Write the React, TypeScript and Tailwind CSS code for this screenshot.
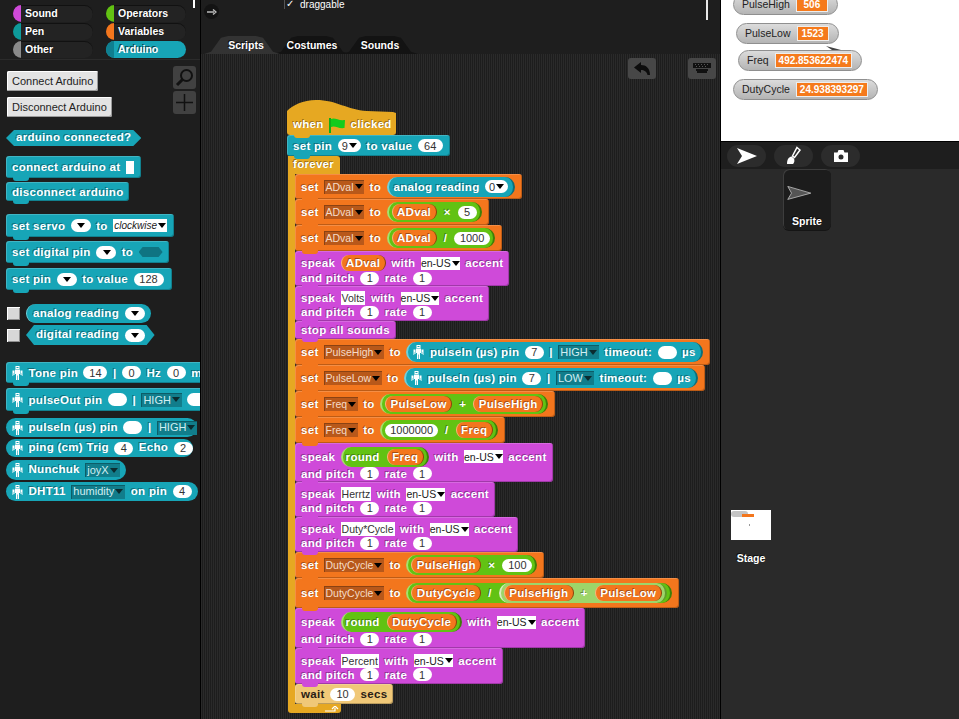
import type { ReactNode } from "react";

const TEAL = "bg-[#17a5b7]";
const ORANGE = "bg-[#f3761d]";
const PURPLE = "bg-[#cf4ad9]";
const BEVEL = "shadow-[inset_1px_1px_0_rgba(255,255,255,0.18),inset_-1px_-1px_0_rgba(0,0,0,0.22)]";

interface BlockProps {
  bg: string;
  className?: string;
  children: ReactNode;
}

function Block({ bg, className = "", children }: BlockProps) {
  return (
    <div className={`relative flex w-fit flex-col justify-center rounded-[3px] pl-[6px] pr-[6px] ${BEVEL} ${bg} ${className}`}>
      {children}
      <span className="absolute -bottom-[3px] left-[7px] z-10 h-[5px] w-[16px] rounded-b-[3px] bg-inherit" />
    </div>
  );
}

function Row({ children }: { children: ReactNode }) {
  return <div className="flex min-h-[14px] items-center gap-[5.500px] whitespace-nowrap leading-[14px]">{children}</div>;
}

function Arrow({ className = "border-t-black" }: { className?: string }) {
  return <span className={`ml-[1px] inline-block h-0 w-0 border-x-[4px] border-t-[5px] border-x-transparent ${className}`} />;
}

function Num({ children, wide = "" }: { children?: ReactNode; wide?: string }) {
  return (
    <span className={`inline-flex h-[13px] min-w-[19px] items-center justify-center rounded-full bg-white px-[5px] text-[11px] font-normal tracking-normal text-[#333] [text-shadow:none] ${wide}`}>
      {children}
    </span>
  );
}

function NumDrop({ children }: { children?: ReactNode }) {
  return (
    <span className="inline-flex h-[13px] min-w-[20px] items-center justify-center rounded-full bg-white px-[4px] text-[11px] font-normal tracking-normal text-[#333] [text-shadow:none]">
      {children}
      <Arrow />
    </span>
  );
}

function WhiteDrop({ children }: { children: ReactNode }) {
  return (
    <span className="inline-flex h-[13px] items-center bg-white px-0 text-[10.500px] font-normal tracking-normal text-[#222] [text-shadow:none]">
      {children}
      <Arrow />
    </span>
  );
}

function TextSlot({ children }: { children: ReactNode }) {
  return <span className="inline-flex h-[14px] items-center bg-white px-[1px] text-[10.500px] font-normal tracking-normal text-[#333] [text-shadow:none]">{children}</span>;
}

function VarDrop({ children }: { children: ReactNode }) {
  return (
    <span className="inline-flex h-[14px] items-center bg-[#b8581a] px-[1.500px] text-[10.500px] font-normal tracking-normal text-[#f5dcc8] shadow-[inset_1px_1px_0_rgba(0,0,0,0.25)] [text-shadow:none]">
      {children}
      <Arrow />
    </span>
  );
}

function TealDrop({ children }: { children: ReactNode }) {
  return (
    <span className="inline-flex h-[14px] items-center bg-[#117d8b] px-[2px] text-[11px] font-normal tracking-normal text-[#d2eef2] shadow-[inset_1px_1px_0_rgba(0,0,0,0.25)] [text-shadow:none]">
      {children}
      <Arrow className="border-t-[#0b2c30]" />
    </span>
  );
}

function Var({ children }: { children: ReactNode }) {
  return (
    <span className="inline-flex h-[16px] items-center rounded-full border-l border-r border-l-[#ffb27a] border-r-[#8a3f08] bg-[#f3761d] px-[4.500px]">
      {children}
    </span>
  );
}

function Op({ children, light = false }: { children: ReactNode; light?: boolean }) {
  return (
    <span
      className={`inline-flex h-[20px] items-center gap-[7px] rounded-full border-l-2 border-r-2 px-[3px] ${
        light ? "border-l-[#d9efc2] border-r-[#5f9c2a] bg-[#9dd56a]" : "border-l-[#a5e06f] border-r-[#3d7f08] bg-[#62c213]"
      }`}
    >
      {children}
    </span>
  );
}

function Robot() {
  return (
    <svg width="11" height="14" viewBox="0 0 11 14" className="shrink-0">
      <path
        d="M3.500 0h4v3h-4zM3 3.500h5V8H7V14H5.800V9.500H5.200V14H4V8H3zM0.500 4.500h2V9H1.500V7H1.200V10H0.500zM8.500 4.500h2V10H9.800V7H9.500V9H8.500z"
        fill="#fff"
      />
      <rect x="4.500" y="1" width="2" height="1" fill="#17a5b7" />
    </svg>
  );
}

function Speak({ first, className = "h-[35px] pt-[3px]" }: { first: ReactNode; className?: string }) {
  return (
    <Block bg={PURPLE} className={className}>
      <Row>
        speak
        {first}
        with
        <WhiteDrop>en-US</WhiteDrop>
        accent
      </Row>
      <Row>
        and pitch <Num>1</Num> rate <Num>1</Num>
      </Row>
    </Block>
  );
}

function SetVar({ name, className = "h-[26px]", children }: { name: string; className?: string; children: ReactNode }) {
  return (
    <Block bg={ORANGE} className={`!pr-[7px] ${className}`}>
      <Row>
        set <VarDrop>{name}</VarDrop> to {children}
      </Row>
    </Block>
  );
}

function PulseIn({ level }: { level: string }) {
  return (
    <span className="inline-flex h-[20px] items-center gap-[5.500px] rounded-full border-l-2 border-r-2 border-l-[#6fd0dc] border-r-[#0c6e7b] bg-[#17a5b7] px-[5px]">
      <Robot />
      pulseIn (µs) pin <Num>7</Num> | <TealDrop>{level}</TealDrop> timeout: <Num /> µs
    </span>
  );
}

function Category({ name, tab, active = false }: { name: string; tab: string; active?: boolean }) {
  return (
    <div className={`flex h-[17px] items-center gap-[4px] overflow-hidden rounded-full ${active ? "bg-[#17a5b7]" : "bg-[#232323] shadow-[inset_0_1px_0_#111]"}`}>
      <span className={`h-full w-[8px] ${tab}`} />
      <span className="text-[10.500px] font-bold text-white [text-shadow:-1px_-1px_0_rgba(0,0,0,0.6)]">{name}</span>
    </div>
  );
}

function PaletteButton({ children, className = "" }: { children: ReactNode; className?: string }) {
  return (
    <div className={`flex h-[20px] w-fit items-center rounded-[2px] bg-[#e3e3e3] px-[5px] text-[11px] text-[#222] shadow-[inset_1px_1px_0_#fff,inset_-1px_-1px_0_#9a9a9a] ${className}`}>
      {children}
    </div>
  );
}

function IconButton({ children, className = "" }: { children: ReactNode; className?: string }) {
  return <div className={`flex h-[23px] w-[23px] items-center justify-center rounded-[3px] bg-[#414141] ${className}`}>{children}</div>;
}

function Check({ className = "" }: { className?: string }) {
  return <span className={`block h-[13px] w-[13px] bg-[#d8d8d8] shadow-[inset_1px_1px_0_#fff,inset_-1px_-1px_0_#8f8f8f] ${className}`} />;
}

function Palette() {
  return (
    <aside className="relative h-full w-[201px] shrink-0 overflow-hidden border-r border-black bg-[#1e1e1e]">
      <span className="absolute left-[193px] top-0 h-[8px] w-[2px] bg-white" />
      <div className="grid grid-cols-[80px_80px] gap-x-[13px] gap-y-[1px] pl-[13px] pt-[5px]">
        <Category name="Sound" tab="bg-[#cf4ad9]" />
        <Category name="Operators" tab="bg-[#62c213]" />
        <Category name="Pen" tab="bg-[#0e9a9a]" />
        <Category name="Variables" tab="bg-[#f3761d]" />
        <Category name="Other" tab="bg-[#8a8a8a]" />
        <Category name="Arduino" tab="bg-[#0f7f90]" active />
      </div>
      <div className="mt-[1px] h-px bg-[#2b2b2b]" />

      <div className="flex justify-between pl-[7px] pr-[4px] pt-[6px]">
        <div className="flex flex-col gap-[6px] pt-[5px]">
          <PaletteButton>Connect Arduino</PaletteButton>
          <PaletteButton>Disconnect Arduino</PaletteButton>
        </div>
        <div className="flex flex-col gap-[2px]">
          <IconButton>
            <svg width="19" height="19" viewBox="0 0 19 19" fill="none" stroke="#111" strokeWidth="2">
              <circle cx="11.500" cy="7.500" r="5.500" />
              <path d="M7.500 11.500L2 17" strokeWidth="3" />
            </svg>
          </IconButton>
          <IconButton>
            <svg width="17" height="17" viewBox="0 0 17 17" stroke="#111" strokeWidth="1.500">
              <path d="M8.500 0v17M0 8.500h17" />
            </svg>
          </IconButton>
        </div>
      </div>

      <div className="mt-[13px] flex flex-col pl-[6px] text-[11.500px] font-bold tracking-[0.3px] text-white [text-shadow:-1px_-1px_0_rgba(0,0,0,0.35)]">
        <div className="flex h-[16px] w-fit items-center bg-[#17a5b7] px-[10px] [clip-path:polygon(0_50%,8px_0,calc(100%-8px)_0,100%_50%,calc(100%-8px)_100%,8px_100%)]">
          arduino connected?
        </div>
        <Block bg={TEAL} className="mt-[10px] h-[22px] !pr-[7px]">
          <Row>
            connect arduino at <span className="h-[13px] w-[8px] bg-white" />
          </Row>
        </Block>
        <Block bg={TEAL} className="mt-[4px] h-[19px]">
          <Row>disconnect arduino</Row>
        </Block>
        <Block bg={TEAL} className="mt-[13px] h-[23px] !pr-[7px]">
          <Row>
            set servo <NumDrop /> to
            <span className="inline-flex h-[13px] items-center bg-white px-[1px] text-[10px] font-normal italic tracking-normal text-[#222] [text-shadow:none]">
              clockwise
              <Arrow />
            </span>
          </Row>
        </Block>
        <Block bg={TEAL} className="mt-[4px] h-[22px]">
          <Row>
            set digital pin <NumDrop /> to
            <span className="h-[10px] w-[24px] bg-[#0f7482] [clip-path:polygon(0_50%,4px_0,calc(100%-4px)_0,100%_50%,calc(100%-4px)_100%,4px_100%)]" />
          </Row>
        </Block>
        <Block bg={TEAL} className="mt-[5px] h-[22px] !pr-[8px]">
          <Row>
            set pin <NumDrop /> to value <Num wide="w-[30px]">128</Num>
          </Row>
        </Block>

        <div className="mt-[14px] flex items-center gap-[6px] pl-[1px]">
          <Check />
          <span className="inline-flex h-[19px] items-center gap-[5.500px] rounded-full border-l border-[#6fd0dc] bg-[#17a5b7] px-[6px]">
            analog reading <NumDrop />
          </span>
        </div>
        <div className="mt-[2px] flex items-center gap-[6px] pl-[1px]">
          <Check />
          <span className="inline-flex h-[20px] items-center gap-[5.500px] bg-[#17a5b7] px-[10px] [clip-path:polygon(0_50%,8px_0,calc(100%-8px)_0,100%_50%,calc(100%-8px)_100%,8px_100%)]">
            digital reading <NumDrop />
          </span>
        </div>

        <Block bg={TEAL} className="mt-[17px] h-[21px]">
          <Row>
            <Robot /> Tone pin <Num wide="w-[24px]">14</Num> | <Num>0</Num> Hz <Num>0</Num> ms
          </Row>
        </Block>
        <Block bg={TEAL} className="mt-[5px] h-[23px]">
          <Row>
            <Robot /> pulseOut pin <Num /> | <TealDrop>HIGH</TealDrop> <Num />
          </Row>
        </Block>
        <div className="mt-[7px] flex h-[19px] w-fit items-center gap-[5.500px] whitespace-nowrap rounded-full bg-[#17a5b7] pl-[6px]">
          <Robot /> pulseIn (µs) pin <Num /> | <TealDrop>HIGH</TealDrop>
        </div>
        <div className="mt-[2px] flex h-[18px] w-fit items-center gap-[5.500px] whitespace-nowrap rounded-full bg-[#17a5b7] pl-[6px]">
          <Robot /> ping (cm) Trig <Num>4</Num> Echo <Num>2</Num>
        </div>
        <div className="mt-[3px] flex h-[20px] w-fit items-center gap-[5.500px] whitespace-nowrap rounded-full bg-[#17a5b7] px-[6px]">
          <Robot /> Nunchuk <TealDrop>joyX</TealDrop>
        </div>
        <div className="mt-[2px] flex h-[19px] w-fit items-center gap-[5.500px] whitespace-nowrap rounded-full bg-[#17a5b7] px-[6px]">
          <Robot /> DHT11 <TealDrop>humidity</TealDrop> on pin <Num>4</Num>
        </div>
      </div>
    </aside>
  );
}

function Tab({ children, active = false, className = "" }: { children: ReactNode; active?: boolean; className?: string }) {
  return (
    <div
      className={`flex h-[18px] w-[76px] items-center justify-center pt-[1px] text-[10.500px] font-bold text-white [clip-path:polygon(0_100%,7px_88%,17px_10%,24px_0,calc(100%-24px)_0,calc(100%-17px)_10%,calc(100%-7px)_88%,100%_100%)] [text-shadow:-1px_-1px_0_rgba(0,0,0,0.7)] ${
        active ? "z-10 bg-[#333333]" : "bg-[#131313]"
      } ${className}`}
    >
      {children}
    </div>
  );
}

function Script() {
  return (
    <div className="flex flex-col pl-[86px] pt-[46px] text-[11.500px] font-bold tracking-[0.3px] text-white [text-shadow:-1px_-1px_0_rgba(0,0,0,0.35)]">
      {/* hat */}
      <div className="flex w-fit flex-col">
        <svg width="109" height="13" viewBox="0 0 109 13" className="block">
          <path d="M0 13V11C6 5 16 0 29 0C50 0 60 10 80 11L106 12L109 13z" fill="#e6a822" />
        </svg>
        <div className="relative flex h-[22px] w-[109px] items-center gap-[5px] rounded-b-[3px] bg-[#e6a822] pl-[6px] pt-[2px]">
          when
          <svg width="17" height="17" viewBox="0 0 17 17" className="shrink-0">
            <path d="M1 1V16" stroke="#0fae17" strokeWidth="2" />
            <path d="M2 2C6 0 9 4 16 3L15.500 11C9 12 6 8 2 10z" fill="#12cc1c" />
          </svg>
          clicked
          <span className="absolute -bottom-[3px] left-[7px] z-10 h-[5px] w-[16px] rounded-b-[3px] bg-inherit" />
        </div>
      </div>
      <Block bg={TEAL} className="h-[21px] !pr-[7px]">
        <Row>
          set pin <NumDrop>9</NumDrop> to value <Num wide="w-[25px]">64</Num>
        </Row>
      </Block>

      {/* forever */}
      <div className="relative ml-[1px] flex h-[18px] w-[52px] items-center rounded-tr-[3px] bg-[#e6a822] pl-[5px]">forever</div>
      <div className="ml-[1px] flex flex-col border-l-[7px] border-[#e6a822]">
        <SetVar name="ADval" className="h-[25px]">
          <span className="inline-flex h-[20px] items-center gap-[5.500px] rounded-full border-l-2 border-r-2 border-l-[#6fd0dc] border-r-[#0c6e7b] bg-[#17a5b7] px-[5px]">
            analog reading <NumDrop>0</NumDrop>
          </span>
        </SetVar>
        <SetVar name="ADval">
          <Op>
            <Var>ADval</Var> × <Num>5</Num>
          </Op>
        </SetVar>
        <SetVar name="ADval">
          <Op>
            <Var>ADval</Var> / <Num wide="w-[36px]">1000</Num>
          </Op>
        </SetVar>
        <Speak first={<Var>ADval</Var>} />
        <Speak first={<TextSlot>Volts</TextSlot>} />
        <Block bg={PURPLE} className="h-[18px]">
          <Row>stop all sounds</Row>
        </Block>
        <SetVar name="PulseHigh">
          <PulseIn level="HIGH" />
        </SetVar>
        <SetVar name="PulseLow">
          <PulseIn level="LOW" />
        </SetVar>
        <SetVar name="Freq">
          <Op>
            <Var>PulseLow</Var> + <Var>PulseHigh</Var>
          </Op>
        </SetVar>
        <SetVar name="Freq">
          <Op>
            <Num wide="w-[53px]">1000000</Num> / <Var>Freq</Var>
          </Op>
        </SetVar>
        <Speak
          first={
            <Op>
              round <Var>Freq</Var>
            </Op>
          }
          className="h-[39px] pt-[2px]"
        />
        <Speak first={<TextSlot>Herrtz</TextSlot>} />
        <Speak first={<TextSlot>Duty*Cycle</TextSlot>} />
        <SetVar name="DutyCycle">
          <Op>
            <Var>PulseHigh</Var> × <Num wide="w-[30px]">100</Num>
          </Op>
        </SetVar>
        <SetVar name="DutyCycle" className="h-[30px]">
          <Op>
            <Var>DutyCycle</Var> /
            <Op light>
              <Var>PulseHigh</Var> + <Var>PulseLow</Var>
            </Op>
          </Op>
        </SetVar>
        <Speak
          first={
            <Op>
              round <Var>DutyCycle</Var>
            </Op>
          }
          className="h-[40px] pt-[2px]"
        />
        <Speak first={<TextSlot>Percent</TextSlot>} className="h-[36px] pt-[3px]" />
        <Block bg="bg-[#f0c878]" className="h-[20px]">
          <Row>
            <span className="text-[#2a2015] [text-shadow:none]">wait</span> <Num wide="w-[25px]">10</Num>{" "}
            <span className="text-[#2a2015] [text-shadow:none]">secs</span>
          </Row>
        </Block>
      </div>
      <div className="relative ml-[1px] flex h-[9px] w-[53px] items-center justify-end rounded-b-[3px] bg-[#e6a822] pr-[2px]">
        <svg width="14" height="6" viewBox="0 0 14 6" className="block">
          <path d="M0 5H10V2M7 3L10 0L13 3" fill="none" stroke="#fff" strokeWidth="1.200" />
        </svg>
      </div>
    </div>
  );
}

function Editor() {
  return (
    <main className="flex h-full w-[519px] shrink-0 flex-col bg-[#1e1e1e]">
      <div className="relative h-[36px] shrink-0">
        <span className="absolute left-[505px] top-0 h-[20px] w-[2px] bg-[#e8e8e8]" />
        <div className="flex pl-[3px] pt-[4px]">
          <span className="flex h-[15px] w-[15px] items-center justify-center rounded-full bg-[#131313]">
            <svg width="10" height="6" viewBox="0 0 10 6">
              <path d="M0 3H7M6 .5L9 3L6 5.500" fill="none" stroke="#bbb" strokeWidth="1.400" />
            </svg>
          </span>
          <label className="ml-[65px] -mt-[4px] flex h-[9px] items-start gap-[5px] text-[10px] text-white">
            <span className="-mt-[2px] flex h-[11px] w-[11px] items-center justify-center border-l border-[#555] text-[10px] leading-none">✓</span>
            <span className="-mt-[2px] leading-[13px]">draggable</span>
          </label>
        </div>
      </div>
      <div className="flex h-[18px] shrink-0 pl-[3px]">
        <Tab active className="pl-[8px]">Scripts</Tab>
        <Tab className="-ml-[6px]">Costumes</Tab>
        <Tab className="-ml-[8px]">Sounds</Tab>
      </div>
      <div className="relative flex-1 overflow-hidden bg-[repeating-linear-gradient(90deg,#2a2a2a_0,#2a2a2a_1px,#1d1d1d_1px,#1d1d1d_2px)]">
        <div className="absolute right-[64px] top-[4px] flex h-[21px] w-[28px] items-center justify-center rounded-[3px] bg-[#474747]">
          <svg width="17" height="14" viewBox="0 0 17 14">
            <path d="M0 5.500L7 0V3C12 3 16 6 16 13H13.500C13 9.500 10 8 7 8V11z" fill="#0d0d0d" />
          </svg>
        </div>
        <div className="absolute right-[4px] top-[4px] flex h-[21px] w-[28px] items-center justify-center rounded-[3px] bg-[#474747]">
          <svg width="18" height="11" viewBox="0 0 18 11" fill="#111">
            <path d="M0 0h18v5h-18zM3 6h12v2h-1v2H4V8H3z" />
            <path d="M2 1h1v1H2zM5 1h1v1H5zM8 1h1v1H8zM11 1h1v1h-1zM14 1h1v1h-1zM3 3h1v1H3zM6 3h1v1H6zM9 3h1v1H9zM12 3h1v1h-1z" fill="#555" />
          </svg>
        </div>
        <Script />
      </div>
    </main>
  );
}

function Monitor({ name, value, className }: { name: string; value: string; className: string }) {
  return (
    <div className={`absolute flex h-[21px] items-center gap-[6px] rounded-full border border-[#8f8f8f] bg-gradient-to-b from-[#dcdcdc] to-[#b4b4b4] pl-[8px] pr-[9px] text-[10.500px] text-[#222] ${className}`}>
      {name}
      <span className="flex h-[15px] min-w-[32px] items-center justify-center border border-[#eee] bg-[#f57a1c] px-[3px] text-[10px] font-bold text-white">
        {value}
      </span>
    </div>
  );
}

function CorralButton({ children }: { children: ReactNode }) {
  return <div className="flex h-[22px] w-[39px] items-center justify-center rounded-full bg-[#2c2c2c]">{children}</div>;
}

function RightPane() {
  return (
    <section className="flex h-full w-[239px] shrink-0 flex-col border-l border-black bg-[#2a2a2a]">
      {/* stage */}
      <div className="relative h-[141px] shrink-0 overflow-hidden bg-white">
        <Monitor name="PulseHigh" value="506" className="left-[12px] -top-[6px]" />
        <Monitor name="PulseLow" value="1523" className="left-[15px] top-[23px]" />
        <svg width="16" height="5" viewBox="0 0 16 5" className="absolute left-[105px] top-[46px]">
          <path d="M0 0L15 4L6 4z" fill="#444" />
        </svg>
        <Monitor name="Freq" value="492.853622474" className="left-[17px] top-[50px]" />
        <Monitor name="DutyCycle" value="24.938393297" className="left-[12px] top-[79px]" />
      </div>
      <div className="flex h-[28px] shrink-0 items-center gap-[8px] border-t border-black bg-[#1e1e1e] pl-[6px]">
        <CorralButton>
          <svg width="20" height="16" viewBox="0 0 20 16">
            <path d="M0 0L20 8L0 16L5 8z" fill="#fff" />
          </svg>
        </CorralButton>
        <CorralButton>
          <svg width="16" height="19" viewBox="0 0 16 19">
            <path d="M11 1.500L14 4L8.500 11.500L6.500 10z" fill="none" stroke="#fff" strokeWidth="1.500" />
            <path d="M5.500 10.500C3 11 1 13 1 18H7C9 16 8.500 13 7.500 12z" fill="#fff" />
          </svg>
        </CorralButton>
        <CorralButton>
          <svg width="14" height="12" viewBox="0 0 14 12">
            <path fillRule="evenodd" d="M0 2.500H3.500L4.500 0H9.500L10.500 2.500H14V12H0zM7 4.500A2.500 2.500 0 1 0 7 9.500A2.500 2.500 0 1 0 7 4.500z" fill="#fff" />
          </svg>
        </CorralButton>
      </div>
      <div className="flex flex-1 items-start">
        <div className="flex w-[60px] flex-col items-center pt-[341px]">
          <div className="relative h-[30px] w-[40px] overflow-hidden bg-white">
            <span className="absolute left-0 top-[1px] h-[6px] w-[17px] rounded-full bg-[#c4c4c4]" />
            <span className="absolute left-[11px] top-[4px] h-[3px] w-[12px] bg-[#f3761d]" />
            <span className="absolute left-[18px] top-[14px] h-[2px] w-px bg-[#999]" />
          </div>
          <span className="mt-[11px] text-[10.500px] font-bold text-white [text-shadow:-1px_-1px_0_rgba(0,0,0,0.7)]">Stage</span>
        </div>
        <div className="ml-[2px] flex h-[61px] w-[48px] flex-col items-center rounded-[6px] bg-[#1c1c1c] pt-[17px] shadow-[inset_1px_1px_0_#3d3d3d,0_1px_0_#151515]">
          <svg width="27" height="16" viewBox="0 0 29 17" className="-ml-[16px]">
            <path d="M0.500 0.500L28 8.500L0.500 16L5 8.500z" fill="#555" stroke="#bbb" />
          </svg>
          <span className="mt-[14px] text-[10.500px] font-bold text-white [text-shadow:-1px_-1px_0_rgba(0,0,0,0.7)]">Sprite</span>
        </div>
      </div>
    </section>
  );
}

export default function App() {
  return (
    <div className="flex h-[719px] w-[959px] overflow-hidden bg-[#1e1e1e] font-['Liberation_Sans',Arial,sans-serif]">
      <Palette />
      <Editor />
      <RightPane />
    </div>
  );
}
